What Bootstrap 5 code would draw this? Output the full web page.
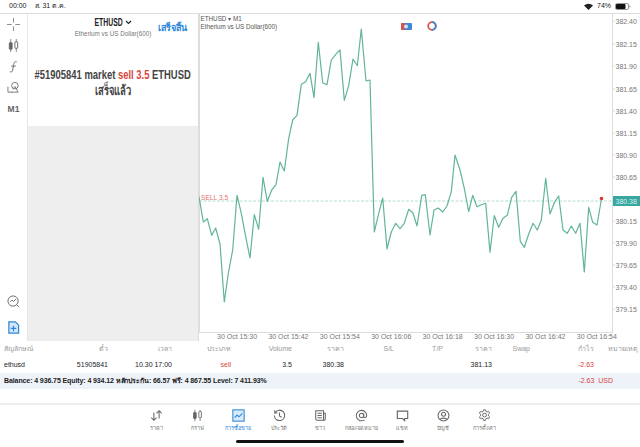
<!DOCTYPE html>
<html lang="th">
<head>
  <meta charset="UTF-8">
  <title>MetaTrader ETHUSD</title>
  <link href="https://cdn.jsdelivr.net/npm/bootstrap@5.3.3/dist/css/bootstrap.min.css" rel="stylesheet">
  <style>
    html, body { width: 640px; height: 447px; overflow: hidden; }
    body { font-family: "Liberation Sans", "Noto Sans", sans-serif; font-size: 7px; color: #333; background: #fff; }
    .status-bar { height: 13px; font-size: 7px; padding: 0 9px; color: #222; }
    .main-row { height: 328px; border-top: 1px solid #ddd; }
    .tools { width: 27px; height: 327px; }
    .tools svg { width: 13px; height: 13px; }
    .tools .m1 { font-size: 8.5px; font-weight: 700; color: #666; }
    .tool-top { padding-top: 4px; gap: 8px; }
    .tool-top > * { height: 14px; line-height: 14px; }
    .tool-bottom { padding-bottom: 7px; gap: 13px; }
    .order-panel { width: 172px; height: 327px; background: #eee; border-right: 1px solid #ddd; border-left: 1px solid #e6e6e6; }
    .order-done { height: 112px; background: #fff; }
    .order-head { height: 30px; padding-top: 2px; }
    .order-title { font-weight: 700; font-size: 10.5px; line-height: 13px; color: #222; gap: 2px; }
    .narrow-title { transform: scaleX(.65); white-space: nowrap; margin: 0 -7.500px; }
    .order-sub { font-size: 6.3px; line-height: 9px; color: #777; }
    .order-finish { right: 11px; top: 8px; font-size: 9px; font-weight: 700; color: #2a86d8; }
    .order-msg { font-weight: 700; font-size: 13px; line-height: 16px; color: #444; padding-top: 23px; }
    .narrow-msg { transform: scaleX(.725); white-space: nowrap; }
    .text-sell { color: #d9453d; }
    .chart { width: 441px; height: 327px; display: block; }
    .chart text { font-family: "Liberation Sans", sans-serif; font-size: 7px; fill: #777; }
    .chart .legend { font-size: 6.3px; fill: #555; }
    .chart .sell-tag { font-size: 6.5px; fill: #e0746f; letter-spacing: .1px; }
    .chart .last-tag { fill: #d8f2ee; }
    .positions { table-layout: fixed; width: 640px; margin: 0; font-size: 7px; --bs-table-bg: transparent; }
    .positions td, .positions th { padding: 0 2px; height: 15px; font-weight: 400; border: 0; vertical-align: middle; white-space: nowrap; }
    .positions th { color: #999; height: 17px; }
    .balance-bar { height: 16px; background: #eef3f9; font-size: 7px; font-weight: 700; color: #222; padding-left: 4px; padding-right: 27px; letter-spacing: -.1px; }
    .balance-profit { color: #d9453d; font-weight: 400; letter-spacing: 0; }
    .spacer { height: 14px; }
    .tabbar { height: 44px; border-top: 2px solid #eee; padding-top: 4px; }
    .tab-item { width: 41px; font-size: 5.5px; line-height: 8px; color: #777; }
    .tab-item svg { width: 13px; height: 13px; display: block; margin: 0 auto 2px; }
    .tab-item.active { color: #2a86d8; }
    .home-bar { width: 168px; height: 3px; background: #111; border-radius: 2px; left: 236px; top: 440px; }
  </style>
</head>
<body>
  <!-- Barra de estado -->
  <div class="status-bar d-flex align-items-center justify-content-between">
    <div class="d-flex gap-2"><span>00:00</span><span>ส. 31 ต.ค.</span></div>
    <div class="d-flex align-items-center gap-1">
      <svg width="9" height="7" viewBox="0 0 9 7"><path d="M0 2.5a6.4 6.4 0 0 1 9 0L4.500 7Z" fill="#222"/></svg>
      <span>74%</span>
      <svg width="16" height="7" viewBox="0 0 16 7"><rect x=".5" y=".5" width="13" height="6" rx="1.500" fill="none" stroke="#999"/><rect x="1" y="1" width="9.500" height="5" rx="1" fill="#111"/><rect x="14.500" y="2.500" width="1" height="2" fill="#999"/></svg>
    </div>
  </div>

  <div class="main-row d-flex">
    <!-- Herramientas -->
    <div class="tools d-flex flex-column justify-content-between align-items-center flex-shrink-0">
      <div class="tool-top d-flex flex-column align-items-center">
        <svg viewBox="0 0 14 14" fill="none" stroke="#777" stroke-width=".9"><path d="M7 0v5M7 9v5M0 7h5M9 7h5"/></svg>
        <svg viewBox="0 0 14 14" fill="#666" stroke="#666"><path d="M4 0v14M10 0v14" stroke-width=".8"/><rect x="2.500" y="4" width="3" height="7" rx=".5"/><rect x="8.500" y="3" width="3" height="7" rx=".5" fill="#fff"/></svg>
        <svg viewBox="0 0 14 14" fill="none" stroke="#666" stroke-width="1"><path d="M10.500 2C8 1 7.500 3 7 6L6 11C5.500 13 4.500 13.500 3 12.500M4.500 6.500H9.500"/></svg>
        <svg viewBox="0 0 14 14" fill="none" stroke="#666" stroke-width=".9"><circle cx="8.500" cy="5" r="3.500"/><path d="M1 6v6h5M6 9l2.500-3 3.500 6H5"/></svg>
        <span class="m1">M1</span>
      </div>
      <div class="tool-bottom d-flex flex-column align-items-center">
        <svg viewBox="0 0 14 14" fill="none" stroke="#666" stroke-width="1"><circle cx="6.500" cy="6.500" r="5.500"/><path d="M3.500 7.500l2-2 1.500 1.500 2.500-2.500M10.500 10.500l2.500 2.500"/></svg>
        <svg viewBox="0 0 14 14"><path d="M2 1h7l3.500 3.500V13H2Z" fill="#d5e8fa" stroke="#2a86d8" stroke-width="1.300"/><path d="M7 5v6M4 8h6" stroke="#2a86d8" stroke-width="1.300"/></svg>
      </div>
    </div>

    <!-- Panel de orden -->
    <div class="order-panel flex-shrink-0">
      <div class="order-done position-relative text-center">
        <div class="order-head">
          <div class="order-title d-flex justify-content-center align-items-center">
            <span class="narrow-title">ETHUSD</span>
            <svg width="7" height="5" viewBox="0 0 7 5" fill="none" stroke="#222" stroke-width="1.100"><path d="M1 1l2.500 2.500L6 1"/></svg>
          </div>
          <div class="order-sub">Etherium vs US Dollar(600)</div>
        </div>
        <span class="order-finish position-absolute">เสร็จสิ้น</span>
        <div class="order-msg">
          <div class="d-flex justify-content-center"><span class="narrow-msg">#51905841 market <span class="text-sell">sell 3.5</span> ETHUSD</span></div>
          <div class="d-flex justify-content-center"><span class="narrow-msg">เสร็จแล้ว</span></div>
        </div>
      </div>
    </div>

    <!-- Grafico -->
    <svg class="chart flex-shrink-0" viewBox="199 14 441 327">
      <path d="M612.500 14V332.500H199.500V14" fill="none" stroke="#ddd"/>
      <path d="M612 21h3M612 44h3M612 66h3M612 89h3M612 111h3M612 133h3M612 155h3M612 177h3M612 221h3M612 243h3M612 265h3M612 287h3M612 309h3" stroke="#ddd"/>
      <line x1="199" y1="201" x2="612" y2="201" stroke="#b4ded0" stroke-dasharray="3 1.500"/>
      <polyline fill="none" stroke="#62b595" stroke-width="1.200" stroke-linejoin="round" points="199,196.700 203.300,222 207.300,218.700 211.700,235.300 215.700,228 220,244 224.300,302 228.300,273.300 232.700,250 237,195.300 241.300,213.300 245.700,236.700 250,258 254.300,214.700 258.700,229.300 263,177.300 267.300,201.300 271.700,190 276,184.700 280,162 284.300,171 288.700,138.300 292.700,120 297,115.300 301.300,84.300 305.700,81.700 310,73.300 314,97.700 318.300,42.300 322.700,82.700 327,84.700 331.300,60 335.700,54.300 340,50 344.300,100.300 348.700,85.700 353,59 357.300,65.700 361.300,29 366,81 370,80 374.300,232 378.700,213.300 382.700,198 387,249 391.300,232 395.700,223.300 400,228.700 404.300,223.300 408.700,209.300 413,213 417,226 421.700,195.300 425.300,194.700 430,235 434,210 438.300,208 442.700,212 447,206 451.300,191.700 455,155 460,170 464.300,188.300 468.700,211.700 472.700,195.300 477,206.700 481.300,204.700 485.700,203.300 490,252.300 494.300,215.700 498.700,227.300 503,218.300 507.300,215.300 511.700,197.300 516,191.300 520.300,241.300 524.300,247.300 528.700,234 533,223.300 537.300,230 541.300,220 545.700,178.300 550,214 554.300,202.700 558.700,196 563,230 567.300,233.300 571.300,226 575.700,233.300 580,223.300 584.300,272 588.700,207.300 592.700,222.300 597,225 601.300,200"/>
      <circle cx="601.500" cy="198.500" r="1.800" fill="#d33"/>
      <text class="legend" x="200.500" y="21">ETHUSD ▾ M1</text>
      <text class="legend" x="200.500" y="29">Etherium vs US Dollar(600)</text>
      <text class="sell-tag" x="201" y="199.500">SELL 3.5</text>
      <rect x="401" y="23" width="11" height="7" rx="1" fill="#3f86d6"/><rect x="401" y="23" width="4" height="7" rx="1" fill="#d5544c"/><circle cx="406" cy="26.500" r="2" fill="#cfe3f7"/>
      <circle cx="432" cy="26" r="3.800" fill="none" stroke="#d5544c" stroke-width="1.800"/><path d="M432 22.200a3.800 3.800 0 0 1 0 7.600" fill="none" stroke="#3f86d6" stroke-width="1.800"/>
      <g id="yLabels"></g>
      <rect x="613" y="196" width="27" height="10" fill="#3aa6a0"/>
      <text class="last-tag" x="615.500" y="203.500">380.38</text>
      <g id="xLabels"></g>
    </svg>
  </div>

  <!-- Tabla de posiciones -->
  <table class="table positions">
    <colgroup>
      <col style="width:60px"><col style="width:50px"><col style="width:64px"><col style="width:59px"><col style="width:61px"><col style="width:52px"><col style="width:50px"><col style="width:49px"><col style="width:49px"><col style="width:38px"><col style="width:64px"><col style="width:44px">
    </colgroup>
    <thead>
      <tr>
        <th class="text-start ps-1">สัญลักษณ์</th><th class="text-end">ตั๋ว</th><th class="text-end">เวลา</th><th class="text-end">ประเภท</th><th class="text-end">Volume</th><th class="text-end">ราคา</th><th class="text-end">S/L</th><th class="text-end">T/P</th><th class="text-end">ราคา</th><th class="text-end">Swap</th><th class="text-end">กำไร</th><th class="text-end">หมายเหตุ</th>
      </tr>
    </thead>
    <tbody>
      <tr>
        <td class="ps-1">ethusd</td><td class="text-end">51905841</td><td class="text-end">10.30 17:00</td><td class="text-end text-sell">sell</td><td class="text-end">3.5</td><td class="text-end">380.38</td><td></td><td></td><td class="text-end">381.13</td><td></td><td class="text-end text-sell">-2.63</td><td></td>
      </tr>
    </tbody>
  </table>
  <div class="balance-bar d-flex align-items-center">
    <span class="flex-grow-1">Balance: 4 936.75 Equity: 4 934.12 หลักประกัน: 66.57 ฟรี: 4 867.55 Level: 7 411.93%</span>
    <span class="balance-profit text-end">-2.63&nbsp; USD</span>
  </div>
  <div class="spacer"></div>

  <!-- Barra inferior -->
  <nav class="tabbar d-flex justify-content-center text-center">
    <div class="tab-item"><svg viewBox="0 0 15 15" fill="none" stroke="#666" stroke-width="1.200"><path d="M4.500 4v9M1.500 10l3 3 3-3M10.500 11V2M7.500 5l3-3 3 3"/></svg>ราคา</div>
    <div class="tab-item"><svg viewBox="0 0 15 15" fill="#666" stroke="#666"><path d="M4.500 1v13M10.500 1v13" stroke-width=".9"/><rect x="3" y="4" width="3" height="7" rx=".5"/><rect x="9" y="3" width="3" height="7" rx=".5" fill="#fff"/></svg>กราฟ</div>
    <div class="tab-item active"><svg viewBox="0 0 15 15" fill="none" stroke="#2a86d8" stroke-width="1.200"><rect x="1" y="1" width="13" height="13" fill="#d9eafa"/><path d="M3 10l3-3 2 2 4-4"/></svg>การซื้อขาย</div>
    <div class="tab-item"><svg viewBox="0 0 15 15" fill="none" stroke="#666" stroke-width="1.200"><path d="M2.200 4.500A6 6 0 1 1 1.500 7.500M2 1.500v3h3M7.500 4v4l2.500 1.500"/></svg>ประวัติ</div>
    <div class="tab-item"><svg viewBox="0 0 15 15" fill="none" stroke="#666" stroke-width="1.200"><path d="M2 2h9v11H3.500A1.500 1.500 0 0 1 2 11.500ZM11 5h2v6.500A1.500 1.500 0 0 1 11 13M4 5h5M4 7.500h5M4 10h5"/></svg>ข่าว</div>
    <div class="tab-item"><svg viewBox="0 0 15 15" fill="none" stroke="#666" stroke-width="1.200"><circle cx="7.500" cy="7.500" r="2.500"/><path d="M10 5v3.500c0 2 3.500 2 3.500-1A6 6 0 1 0 11 12.500"/></svg>กล่องจดหมาย</div>
    <div class="tab-item"><svg viewBox="0 0 15 15" fill="none" stroke="#666" stroke-width="1.300"><path d="M1.500 2.500h12V11H10v2.500L7.500 11h-6Z"/></svg>แชท</div>
    <div class="tab-item"><svg viewBox="0 0 15 15" fill="none" stroke="#666" stroke-width="1.200"><circle cx="7.500" cy="7.500" r="6.300"/><circle cx="7.500" cy="6" r="2.300"/><path d="M3.500 12.200c1-2.200 7-2.200 8 0"/></svg>บัญชี</div>
    <div class="tab-item"><svg viewBox="0 0 15 15" fill="none" stroke="#666" stroke-width="1.100"><path d="M6.300 1h2.400l.4 1.800 1.400.7 1.700-.7 1.200 2-1.400 1.300v1.800l1.400 1.300-1.200 2-1.700-.7-1.400.7-.4 1.800H6.300l-.4-1.800-1.400-.7-1.700.7-1.200-2 1.400-1.300V6.100L1.600 4.800l1.200-2 1.700.7 1.400-.7Z"/><circle cx="7.500" cy="7" r="2.200"/></svg>การตั้งค่า</div>
  </nav>
  <div class="home-bar position-absolute"></div>

  <script>
    // etiquetas de los ejes
    const ns = 'http://www.w3.org/2000/svg';
    const yData = [[21,'382.40'],[44,'382.15'],[66,'381.90'],[89,'381.65'],[111,'381.40'],[133,'381.15'],[155,'380.90'],[177,'380.65'],[221,'380.15'],[243,'379.90'],[265,'379.65'],[287,'379.40'],[309,'379.15']];
    const yBox = document.getElementById('yLabels');
    yData.forEach(([y, label]) => {
      const t = document.createElementNS(ns, 'text');
      t.setAttribute('x', 615.5);
      t.setAttribute('y', y + 2.5);
      t.textContent = label;
      yBox.appendChild(t);
    });
    const xBox = document.getElementById('xLabels');
    ['15:30','15:42','15:54','16:06','16:18','16:30','16:42','16:54'].forEach((hora, i) => {
      const t = document.createElementNS(ns, 'text');
      t.setAttribute('x', 217 + i * 51.4);
      t.setAttribute('y', 339);
      t.textContent = '30 Oct ' + hora;
      xBox.appendChild(t);
    });
  </script>
  <script src="https://cdn.jsdelivr.net/npm/bootstrap@5.3.3/dist/js/bootstrap.bundle.min.js"></script>
</body>
</html>
